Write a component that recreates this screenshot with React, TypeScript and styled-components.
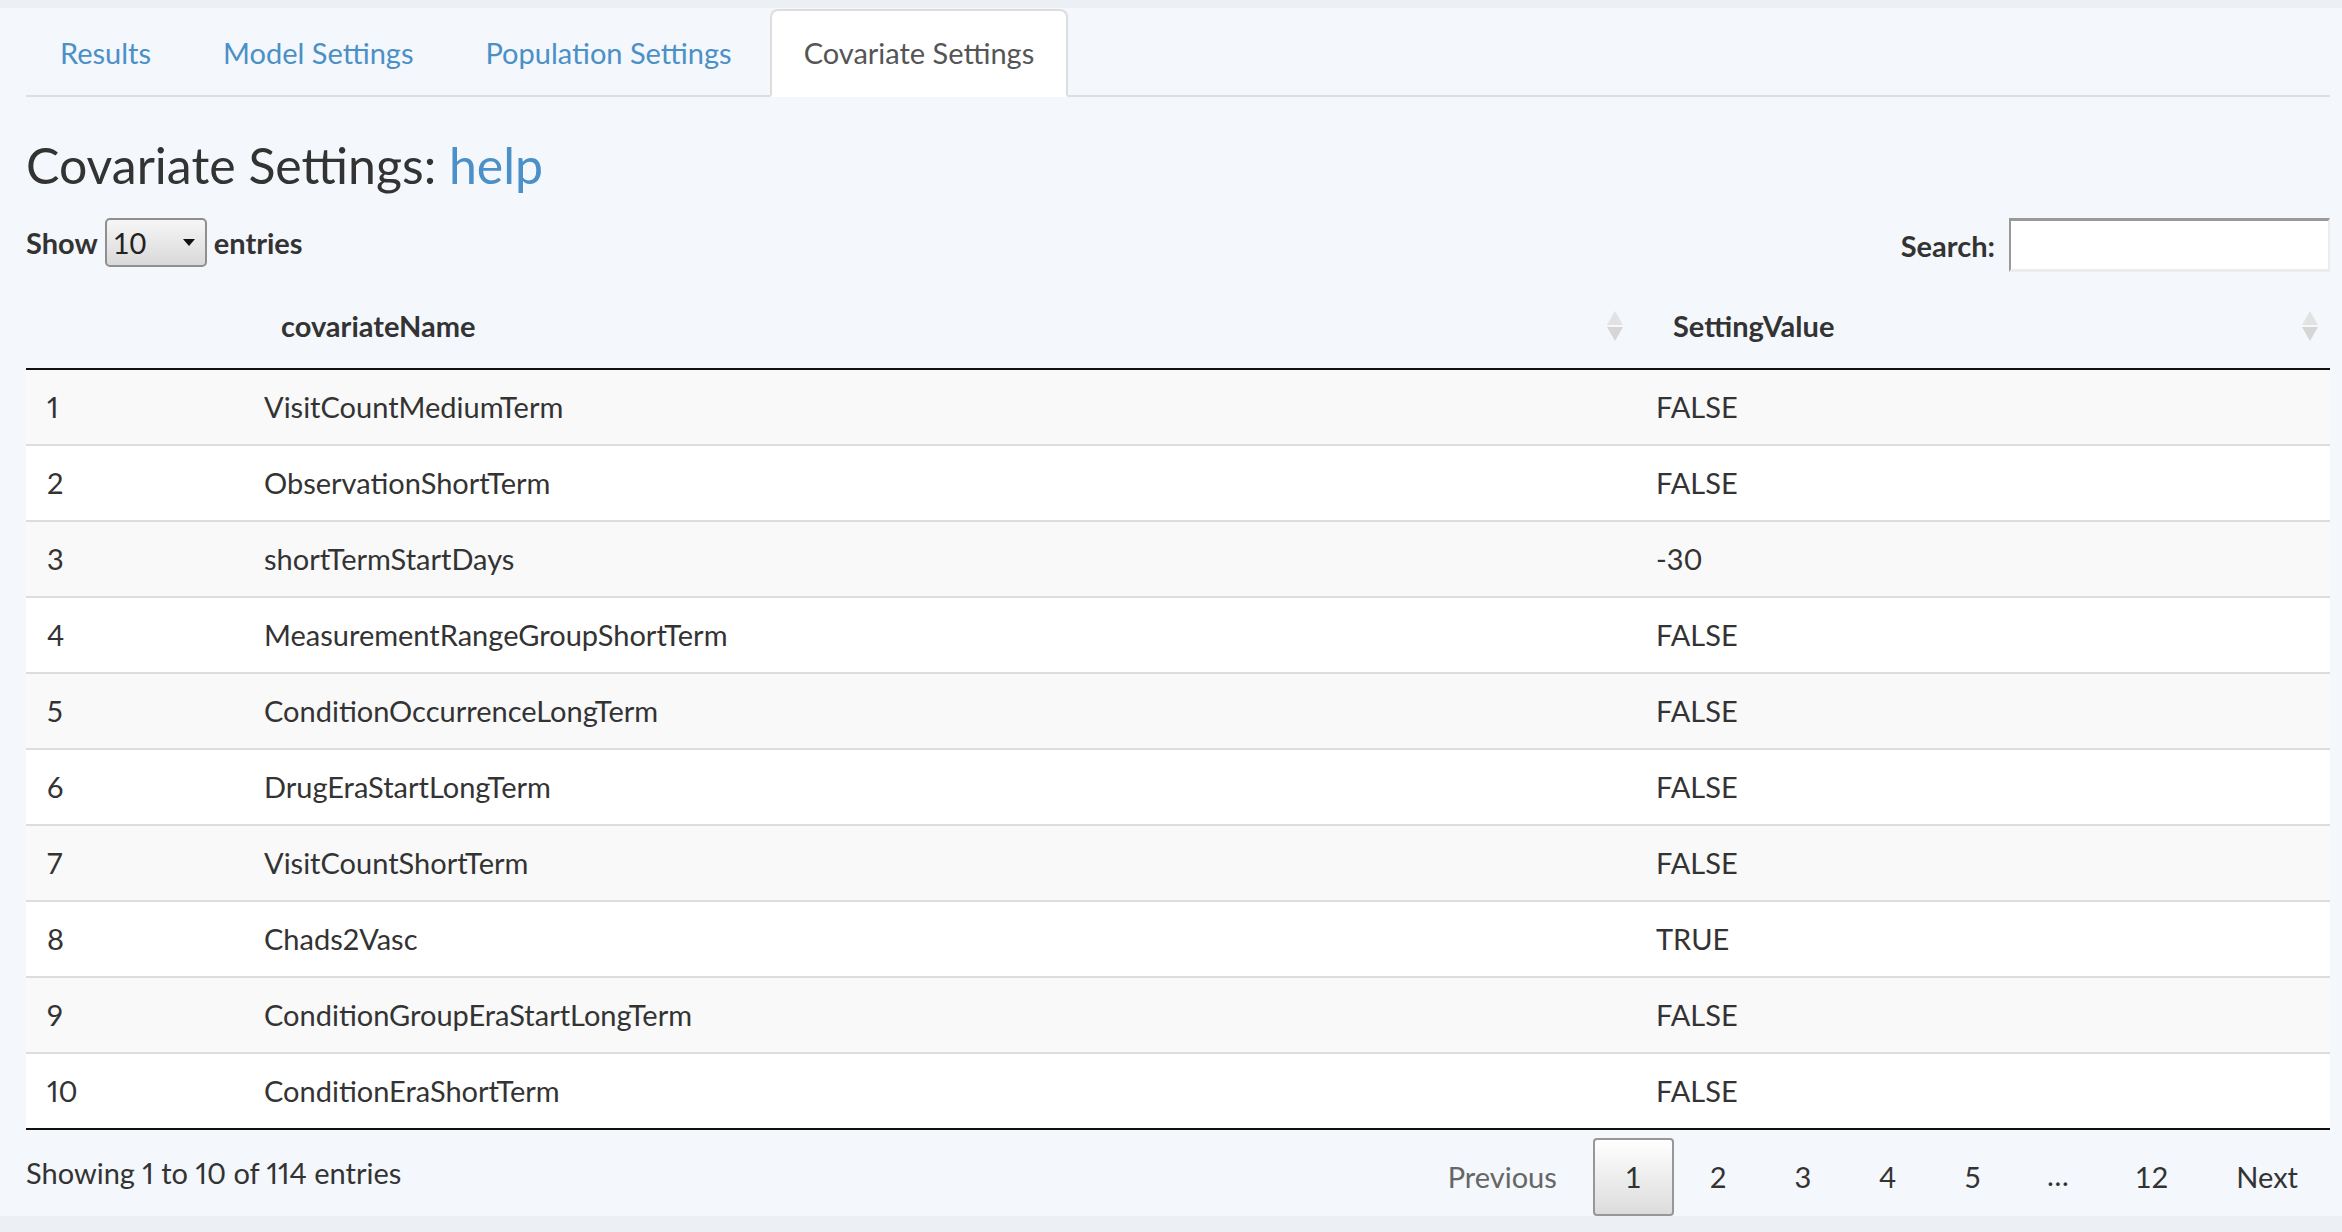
import React from "react";
import styled, { createGlobalStyle } from "styled-components";

const GlobalStyle = createGlobalStyle`
  html, body { margin: 0; padding: 0; }
  body {
    background: #eceff3;
    font-family: Lato, "Open Sans", "Liberation Sans", sans-serif;
    font-size: 29px;
    color: #333;
    font-variant-numeric: proportional-nums;
  }
  * { box-sizing: border-box; }
`;

const Page = styled.div`
  padding-top: 8px;
  padding-bottom: 19px;
  background: #eceff3;
`;

const Panel = styled.div`
  background: #f4f7fb;
  padding: 0 12px 0 26px;
`;

const NavTabs = styled.ul`
  display: flex;
  list-style: none;
  margin: 0;
  padding: 1px 0 0 0;
  border-bottom: 2px solid #dddddd;
`;

const Tab = styled.li<{ $active?: boolean }>`
  margin: 0 4px -2px 0;
  padding: 0 32px;
  line-height: 84px;
  border: 2px solid ${(p) => (p.$active ? "#dddddd" : "transparent")};
  border-bottom-color: transparent;
  border-radius: 8px 8px 0 0;
  background: ${(p) => (p.$active ? "#ffffff" : "transparent")};
  color: ${(p) => (p.$active ? "#555555" : "#4b90c6")};
  white-space: nowrap;
`;

const Title = styled.h3`
  margin: 40px 0 0 0;
  font-size: 50px;
  line-height: 56px;
  font-weight: 400;
  color: #333;
`;

const HelpLink = styled.span`
  color: #4b90c6;
`;

const Controls = styled.div`
  margin-top: 25px;
  display: flex;
  justify-content: space-between;
  align-items: flex-start;
  height: 55px;
`;

const LengthGroup = styled.div`
  display: flex;
  align-items: center;
  height: 49px;
  font-weight: 700;
  line-height: 49px;
  gap: 7px;
`;

const SelectWrap = styled.div`
  position: relative;
  width: 102px;
  height: 49px;
`;

const Select = styled.select`
  appearance: none;
  -webkit-appearance: none;
  width: 100%;
  height: 100%;
  margin: 0;
  padding: 0 0 0 6px;
  border: 2px solid #8f8f8f;
  border-radius: 5px;
  background: linear-gradient(#f6f6f6, #d9d9d9);
  font-family: Lato, "Open Sans", "Liberation Sans", sans-serif;
  font-size: 29px;
  color: #222;
`;

const Caret = styled.span`
  position: absolute;
  right: 12px;
  top: 21px;
  width: 0;
  height: 0;
  border-left: 6px solid transparent;
  border-right: 6px solid transparent;
  border-top: 7px solid #111;
  pointer-events: none;
`;

const FilterGroup = styled.label`
  display: flex;
  align-items: center;
  height: 54px;
  gap: 14px;
  font-weight: 700;
`;

const SearchInput = styled.input`
  width: 321px;
  height: 54px;
  margin: 0;
  padding: 0 6px;
  background: #fff;
  border-top: 3px solid #999;
  border-left: 2px solid #999;
  border-right: 2px solid #ececec;
  border-bottom: 3px solid #ececec;
  font-family: inherit;
  font-size: 29px;
  outline: none;
`;

const Table = styled.table`
  margin-top: 10px;
  width: 2304px;
  table-layout: fixed;
  border-collapse: collapse;
  border-spacing: 0;
  border-bottom: 2px solid #111;
`;

const Th = styled.th`
  padding: 21px 12px 21px 38px;
  line-height: 43px;
  font-weight: 700;
  text-align: left;
  border-bottom: 2px solid #111;
`;

const ThInner = styled.div`
  display: flex;
  justify-content: space-between;
  align-items: center;
`;

const Row = styled.tr<{ $odd: boolean }>`
  background: ${(p) => (p.$odd ? "#f9f9f9" : "#ffffff")};
  &:not(:first-child) > td {
    border-top: 2px solid #dddddd;
  }
`;

const Td = styled.td`
  padding: 17px 21px;
  line-height: 40px;
  color: #333;
  white-space: nowrap;
`;

const Footer = styled.div`
  display: flex;
  justify-content: space-between;
  align-items: flex-start;
  margin-bottom: -3px;
`;

const Info = styled.div`
  margin-top: 21px;
  line-height: 44px;
  color: #333;
`;

const Pagination = styled.div`
  margin-top: 8px;
  display: flex;
  align-items: flex-start;
  font-variant-numeric: tabular-nums;
`;

const PageBtn = styled.span<{ $current?: boolean; $disabled?: boolean }>`
  display: inline-block;
  margin-left: 4px;
  padding: 15px 30px;
  line-height: 44px;
  border: 2px solid ${(p) => (p.$current ? "#979797" : "transparent")};
  border-radius: 4px;
  background: ${(p) =>
    p.$current ? "linear-gradient(#ffffff, #dcdcdc)" : "transparent"};
  color: ${(p) => (p.$disabled ? "#666666" : "#333333")};
`;

const Ellipsis = styled.span`
  display: inline-block;
  margin-left: 4px;
  padding: 15px 30px;
  line-height: 44px;
  color: #333;
`;

const SortIcon = () => (
  <svg width="16" height="30" viewBox="0 0 16 30" aria-hidden="true">
    <polygon points="8,0 16,14 0,14" fill="#e2e2e2" />
    <polygon points="0,16 16,16 8,30" fill="#d6d6d6" />
  </svg>
);

const rows: [number, string, string][] = [
  [1, "VisitCountMediumTerm", "FALSE"],
  [2, "ObservationShortTerm", "FALSE"],
  [3, "shortTermStartDays", "-30"],
  [4, "MeasurementRangeGroupShortTerm", "FALSE"],
  [5, "ConditionOccurrenceLongTerm", "FALSE"],
  [6, "DrugEraStartLongTerm", "FALSE"],
  [7, "VisitCountShortTerm", "FALSE"],
  [8, "Chads2Vasc", "TRUE"],
  [9, "ConditionGroupEraStartLongTerm", "FALSE"],
  [10, "ConditionEraShortTerm", "FALSE"],
];

export default function App() {
  return (
    <>
      <GlobalStyle />
      <Page>
        <Panel>
          <NavTabs>
            <Tab>Results</Tab>
            <Tab>Model Settings</Tab>
            <Tab>Population Settings</Tab>
            <Tab $active>Covariate Settings</Tab>
          </NavTabs>
          <Title>
            Covariate Settings: <HelpLink>help</HelpLink>
          </Title>
          <Controls>
            <LengthGroup>
              <span>Show</span>
              <SelectWrap>
                <Select defaultValue="10">
                  <option value="10">10</option>
                  <option value="25">25</option>
                  <option value="50">50</option>
                  <option value="100">100</option>
                </Select>
                <Caret />
              </SelectWrap>
              <span>entries</span>
            </LengthGroup>
            <FilterGroup>
              <span>Search:</span>
              <SearchInput type="search" />
            </FilterGroup>
          </Controls>
          <Table>
            <colgroup>
              <col style={{ width: 217 }} />
              <col style={{ width: 1392 }} />
              <col style={{ width: 695 }} />
            </colgroup>
            <thead>
              <tr>
                <Th />
                <Th>
                  <ThInner>
                    <span>covariateName</span>
                    <SortIcon />
                  </ThInner>
                </Th>
                <Th>
                  <ThInner>
                    <span>SettingValue</span>
                    <SortIcon />
                  </ThInner>
                </Th>
              </tr>
            </thead>
            <tbody>
              {rows.map(([n, name, value]) => (
                <Row key={n} $odd={n % 2 === 1}>
                  <Td>{n}</Td>
                  <Td>{name}</Td>
                  <Td>{value}</Td>
                </Row>
              ))}
            </tbody>
          </Table>
          <Footer>
            <Info>Showing 1 to 10 of 114 entries</Info>
            <Pagination>
              <PageBtn $disabled>Previous</PageBtn>
              <PageBtn $current>1</PageBtn>
              <PageBtn>2</PageBtn>
              <PageBtn>3</PageBtn>
              <PageBtn>4</PageBtn>
              <PageBtn>5</PageBtn>
              <Ellipsis>…</Ellipsis>
              <PageBtn>12</PageBtn>
              <PageBtn>Next</PageBtn>
            </Pagination>
          </Footer>
        </Panel>
      </Page>
    </>
  );
}
